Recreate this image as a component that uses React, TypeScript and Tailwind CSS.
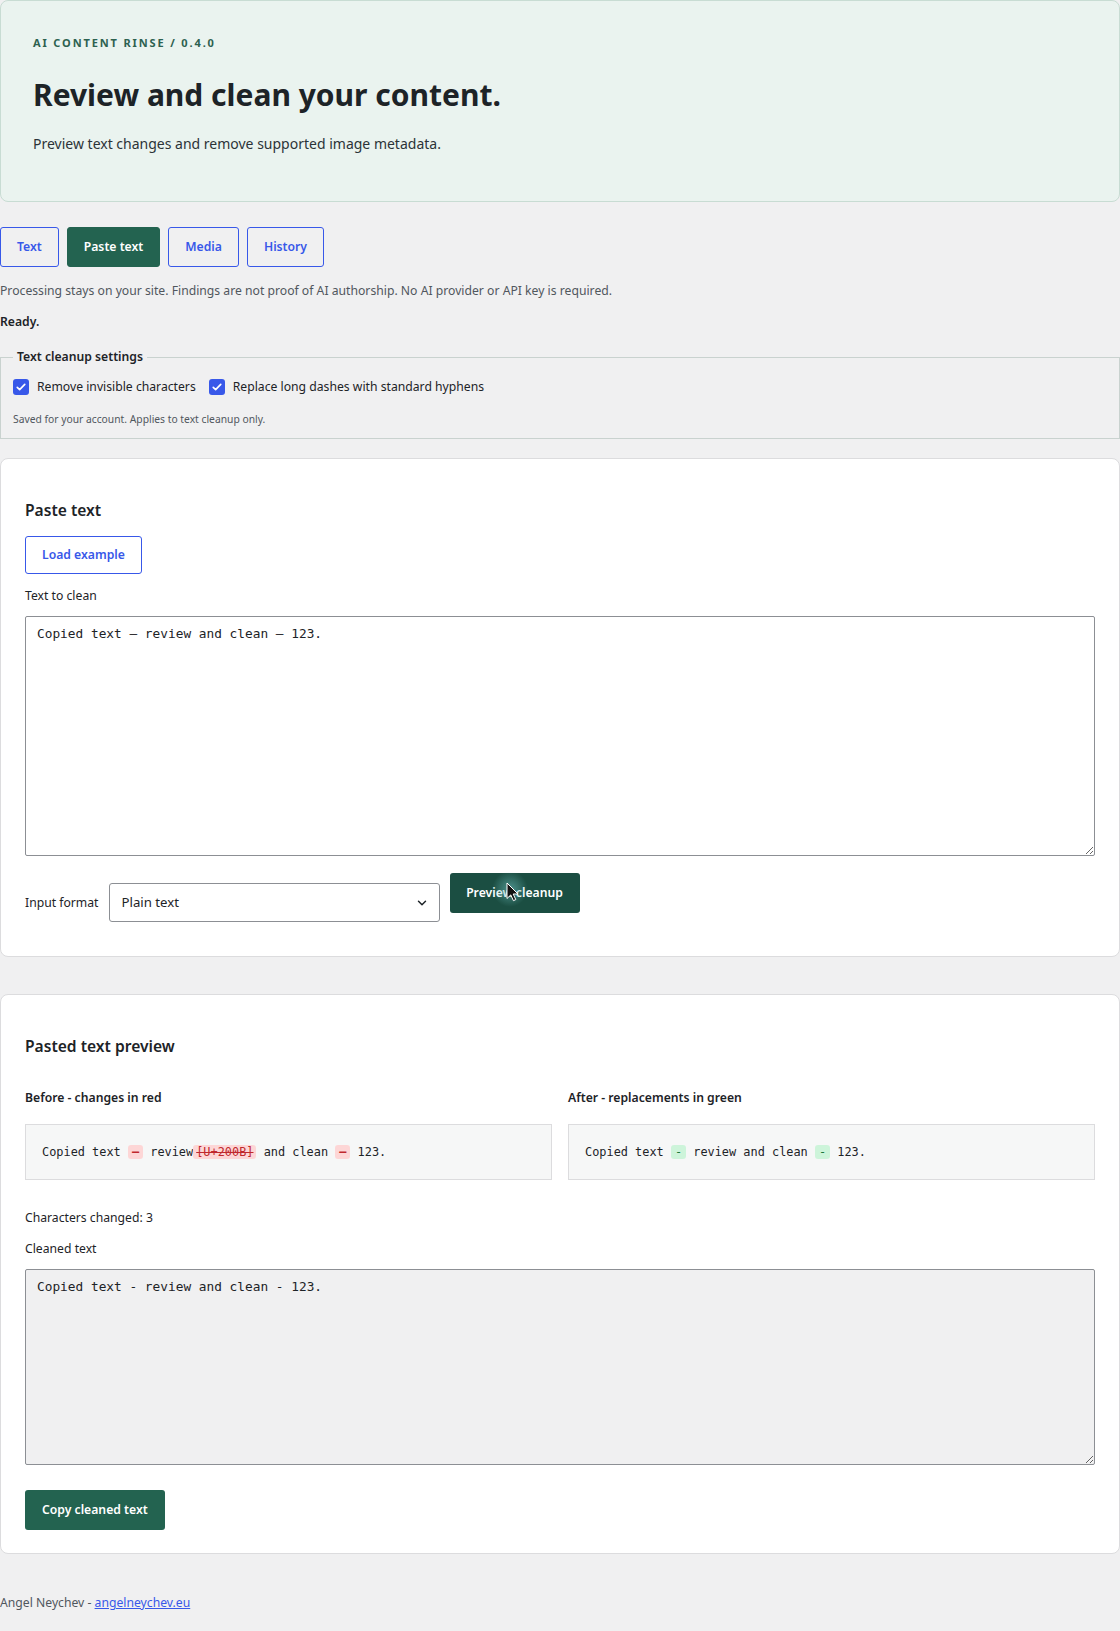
import { useState } from "react";
import { ChevronDown } from "lucide-react";

const tabs = ["Text", "Paste text", "Media", "History"];

const sample = "Copied text \u2014 review\u200B and clean \u2013 123.";
const cleaned = "Copied text - review and clean - 123.";

const CheckBox = ({ label }: { label: string }) => (
  <label className="flex items-center gap-2">
    <span className="flex h-4 w-4 items-center justify-center rounded-[3px] bg-[#3858e9]">
      <svg viewBox="0 0 16 16" className="h-3 w-3" fill="none">
        <path d="M3 8.5l3.2 3L13 4.5" stroke="#fff" strokeWidth="2.2" strokeLinecap="round" strokeLinejoin="round" />
      </svg>
    </span>
    <span>{label}</span>
  </label>
);

// red marks in the "before" column, green ones in the "after" column
const Del = ({ children, strike }: { children: string; strike?: boolean }) => (
  <span className={`rounded-[3px] bg-[#fdd6d6] text-[#c0282d] ${strike ? "px-[3px] line-through" : "px-[4px] font-bold"}`}>
    {children}
  </span>
);

const Ins = ({ children }: { children: string }) => (
  <span className="rounded-[3px] bg-[#cdf4da] px-[4px] text-[#1e7a3d]">{children}</span>
);

export default function App() {
  const [active, setActive] = useState("Paste text");
  const [text, setText] = useState(sample);

  return (
    <div className="min-h-[1631px] w-full bg-[#f0f0f1] font-['Noto_Sans',sans-serif] text-[12.2px] text-[#1d2327]">
      {/* Intro */}
      <header className="rounded-lg border border-[#c8dcd3] bg-[#eaf3ef] px-8 pt-[34px] pb-[45px]">
        <p className="text-[11px] leading-4 font-bold tracking-[0.17em] text-[#2d6150] uppercase">AI Content Rinse / 0.4.0</p>
        <h1 className="mt-6 text-[30px] leading-10 font-bold text-[#1d2327]">Review and clean your content.</h1>
        <p className="mt-[17px] text-[14px] leading-6 text-[#2c3338]">Preview text changes and remove supported image metadata.</p>
      </header>

      <nav className="mt-[25px] flex gap-2">
        {tabs.map((t) => (
          <button
            key={t}
            onClick={() => setActive(t)}
            className={`h-10 rounded-[3px] border px-4 text-[12.2px] font-semibold ${
              active === t ? "border-[#236350] bg-[#236350] text-white" : "border-[#3858e9] text-[#3858e9]"
            }`}
          >
            {t}
          </button>
        ))}
      </nav>

      <p className="mt-[14px] leading-5 text-[#50575e]">
        Processing stays on your site. Findings are not proof of AI authorship. No AI provider or API key is required.
      </p>
      <p className="mt-[11px] leading-5 font-semibold">Ready.</p>

      <fieldset className="mt-[15px] border border-[#c9d2cf] px-3 pb-[11px]">
        <legend className="ml-0 px-1 leading-5 font-semibold">Text cleanup settings</legend>
        <div className="mt-[10px] flex items-center gap-[13px] leading-5">
          <CheckBox label="Remove invisible characters" />
          <CheckBox label="Replace long dashes with standard hyphens" />
        </div>
        <p className="mt-[14px] text-[10.3px] leading-4 text-[#50575e]">Saved for your account. Applies to text cleanup only.</p>
      </fieldset>

      {/* Paste panel */}
      <section className="mt-[19px] rounded-lg border border-[#dcdcde] bg-white px-6 pt-[39px] pb-[34px]">
        <h2 className="text-[15.6px] leading-6 font-semibold">Paste text</h2>
        <button
          onClick={() => setText(sample)}
          className="mt-[14px] h-[38px] rounded-[3px] border border-[#3858e9] bg-white px-4 text-[12.2px] font-semibold text-[#3858e9]"
        >
          Load example
        </button>
        <p className="mt-3 leading-5">Text to clean</p>
        <textarea
          value={text}
          onChange={(e) => setText(e.target.value)}
          className="mt-[10px] block h-[240px] w-full rounded-[2px] border border-[#8c8f94] bg-white px-[11px] py-2 font-['DejaVu_Sans_Mono',monospace] text-[12.8px] leading-[18px] text-[#1d2327] outline-none"
        />
        <div className="mt-[17px] flex items-start gap-[10px]">
          <div className="mt-[10px] flex items-center gap-[10px]">
            <span className="leading-5">Input format</span>
            <div className="relative">
              <select className="h-[39px] w-[331px] appearance-none rounded-[3px] border border-[#8c8f94] bg-white pl-3 text-[13.2px] text-[#1d2327] outline-none">
                <option>Plain text</option>
                <option>HTML</option>
                <option>Markdown</option>
              </select>
              <ChevronDown className="pointer-events-none absolute top-[13px] right-[11px] h-[14px] w-[14px] text-[#1d2327]" strokeWidth={2.5} />
            </div>
          </div>
          <button className="relative h-10 w-[130px] rounded-[3px] bg-[#1b4e42] text-[12.2px] font-semibold text-white">
            Preview cleanup
            {/* pointer over the button */}
            <span className="pointer-events-none absolute top-[-2px] left-[42px] h-9 w-9 rounded-full bg-[radial-gradient(circle,rgba(110,190,190,0.6),rgba(110,190,190,0)_70%)]" />
            <svg viewBox="0 0 13 20" className="pointer-events-none absolute top-[9px] left-[56px] h-[20px] w-[13px]">
              <path d="M1 1v15.5l3.8-3.6 2.6 5.8 2.4-1.1-2.6-5.6H12z" fill="#111" stroke="#fff" strokeWidth="1" strokeLinejoin="round" />
            </svg>
          </button>
        </div>
      </section>

      {/* Preview panel */}
      <section className="mt-[37px] rounded-lg border border-[#dcdcde] bg-white px-6 pt-[39px] pb-[23px]">
        <h2 className="text-[15.6px] leading-6 font-semibold">Pasted text preview</h2>
        <div className="mt-[30px] grid grid-cols-2 gap-4">
          <div>
            <p className="leading-5 font-semibold">Before - changes in red</p>
            <div className="mt-4 border border-[#dcdcde] bg-[#f6f7f7] px-4 py-[17px] font-['DejaVu_Sans_Mono',monospace] text-[11.9px] leading-[20px] whitespace-pre">
              Copied text <Del>{"\u2013"}</Del> review<Del strike>[U+200B]</Del> and clean <Del>{"\u2013"}</Del> 123.
            </div>
          </div>
          <div>
            <p className="leading-5 font-semibold">After - replacements in green</p>
            <div className="mt-4 border border-[#dcdcde] bg-[#f6f7f7] px-4 py-[17px] font-['DejaVu_Sans_Mono',monospace] text-[11.9px] leading-[20px] whitespace-pre">
              Copied text <Ins>-</Ins> review and clean <Ins>-</Ins> 123.
            </div>
          </div>
        </div>
        <p className="mt-7 leading-5">Characters changed: 3</p>
        <p className="mt-[11px] leading-5">Cleaned text</p>
        <textarea
          readOnly
          value={cleaned}
          className="mt-[10px] block h-[196px] w-full rounded-[2px] border border-[#8c8f94] bg-[#f0f0f1] px-[11px] py-2 font-['DejaVu_Sans_Mono',monospace] text-[12.8px] leading-[18px] text-[#1d2327] outline-none"
        />
        <button className="mt-[25px] h-10 rounded-[3px] bg-[#236350] px-[17px] text-[12.2px] font-semibold text-white">
          Copy cleaned text
        </button>
      </section>

      <footer className="mt-[39px] leading-5 text-[#50575e]">
        Angel Neychev -{" "}
        <a href="#" className="text-[#3858e9] underline">
          angelneychev.eu
        </a>
      </footer>
    </div>
  );
}
